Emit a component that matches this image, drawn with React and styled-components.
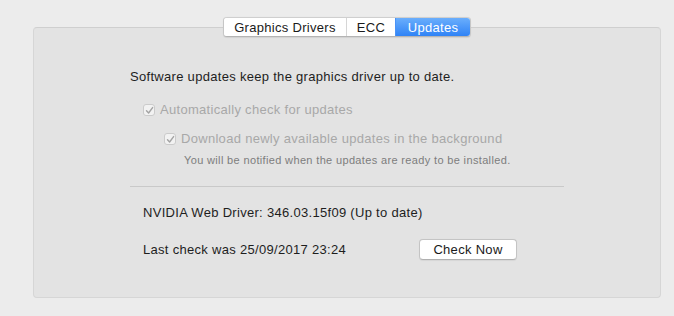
import styled, { createGlobalStyle } from "styled-components";

const GlobalStyle = createGlobalStyle`
  html, body {
    margin: 0;
    padding: 0;
    background: #ececec;
    font-family: "Liberation Sans", Arial, sans-serif;
    -webkit-font-smoothing: antialiased;
  }
`;

const CheckIcon = () => (
  <svg width="9" height="9" viewBox="0 0 9 9">
    <path
      d="M1.5 4.8 L3.6 7 L7.6 1.6"
      fill="none"
      stroke="#a3a3a3"
      strokeWidth="1.4"
      strokeLinecap="round"
      strokeLinejoin="round"
    />
  </svg>
);

const App = () => {
  const tabs = [
    { label: "Graphics Drivers", width: 122 },
    { label: "ECC", width: 49 },
    { label: "Updates", width: 75 },
  ];
  const active = "Updates";

  return (
    <Window>
      <GlobalStyle />
      <TabBar>
        {tabs.map((t) => (
          <Tab key={t.label} $w={t.width} $active={t.label === active}>
            {t.label}
          </Tab>
        ))}
      </TabBar>
      <Panel>
        <Heading>Software updates keep the graphics driver up to date.</Heading>
        <Option $indent={13}>
          <Box>
            <CheckIcon />
          </Box>
          <span>Automatically check for updates</span>
        </Option>
        <Option $indent={34} $top={13}>
          <Box>
            <CheckIcon />
          </Box>
          <span>Download newly available updates in the background</span>
        </Option>
        <Note>You will be notified when the updates are ready to be installed.</Note>
        <Divider />
        <Info>NVIDIA Web Driver: 346.03.15f09 (Up to date)</Info>
        <CheckRow>
          <span>Last check was 25/09/2017 23:24</span>
          <Button>Check Now</Button>
        </CheckRow>
      </Panel>
    </Window>
  );
};

const Window = styled.div`
  width: 674px;
  height: 316px;
  box-sizing: border-box;
  padding: 17px 13px 0 33px;
  display: flex;
  flex-direction: column;
  align-items: stretch;
`;

const TabBar = styled.div`
  align-self: center;
  display: flex;
  height: 18px;
  margin-bottom: -10px;
  border: 1px solid #c6c6c6;
  border-top-color: #cfcfcf;
  border-bottom-color: #b4b4b4;
  border-radius: 4px;
  background: #ffffff;
  position: relative;
  z-index: 1;
  box-shadow: 0 0.5px 1px rgba(0, 0, 0, 0.08);
  overflow: hidden;
`;

const Tab = styled.div`
  width: ${(p) => p.$w}px;
  box-sizing: border-box;
  display: flex;
  align-items: center;
  justify-content: center;
  font-size: 13px;
  letter-spacing: 0.3px;
  color: ${(p) => (p.$active ? "#ffffff" : "#1a1a1a")};
  background: ${(p) =>
    p.$active ? "linear-gradient(#6aaefc, #2f83f6)" : "#ffffff"};
  border-left: 1px solid ${(p) => (p.$active ? "#4a93f7" : "#d6d6d6")};

  &:first-child {
    border-left: none;
  }
`;

const Panel = styled.div`
  width: 628px;
  height: 271px;
  box-sizing: border-box;
  background: #e3e3e3;
  border: 1px solid #d6d6d6;
  border-top-color: #cfcfcf;
  border-radius: 4px;
  padding: 41px 0 0 96px;
  display: flex;
  flex-direction: column;
  font-size: 13px;
  letter-spacing: 0.3px;
  color: #1e1e1e;
`;

const Heading = styled.div`
  line-height: 16px;
`;

const Option = styled.div`
  display: flex;
  align-items: center;
  gap: 5px;
  margin-left: ${(p) => p.$indent}px;
  margin-top: ${(p) => p.$top ?? 17}px;
  line-height: 16px;
  color: #a8a8a8;
`;

const Box = styled.div`
  width: 12px;
  height: 12px;
  box-sizing: border-box;
  border: 1px solid #cbcbcb;
  border-radius: 3px;
  background: #f2f2f2;
  display: flex;
  align-items: center;
  justify-content: center;
`;

const Note = styled.div`
  margin: 6px 0 0 54px;
  font-size: 11px;
  letter-spacing: 0.35px;
  line-height: 14px;
  color: #7d7d7d;
`;

const Divider = styled.div`
  width: 434px;
  height: 1px;
  background: #c9c9c9;
  margin-top: 19px;
`;

const Info = styled.div`
  margin: 18px 0 0 13px;
  line-height: 16px;
`;

const CheckRow = styled.div`
  width: 374px;
  margin: 18px 0 0 13px;
  display: flex;
  align-items: center;
  justify-content: space-between;
`;

const Button = styled.button`
  width: 98px;
  height: 21px;
  padding: 0;
  font-family: inherit;
  font-size: 13px;
  letter-spacing: 0.3px;
  color: #1a1a1a;
  background: #ffffff;
  border: 1px solid #c4c4c4;
  border-bottom-color: #b0b0b0;
  border-radius: 4px;
  box-shadow: 0 0.5px 1px rgba(0, 0, 0, 0.06);
`;

export default App;
